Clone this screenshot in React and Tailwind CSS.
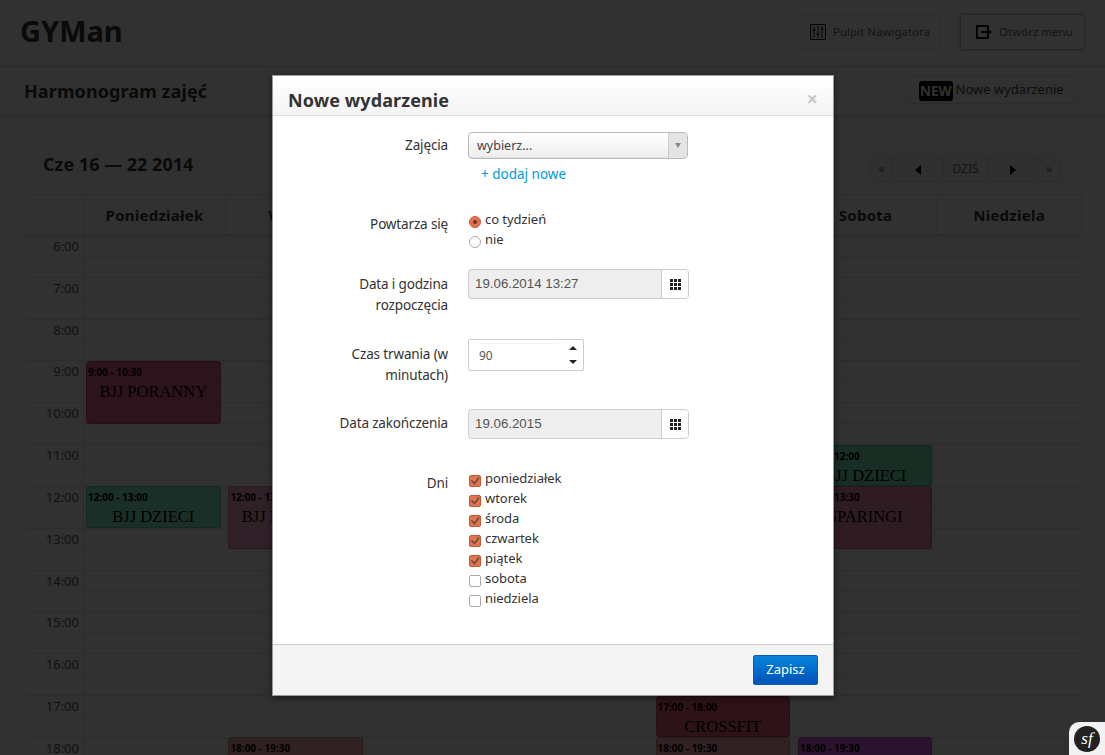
import React from 'react';

const days = ['Poniedziałek', 'Wtorek', 'Środa', 'Czwartek', 'Piątek', 'Sobota', 'Niedziela'];
const hours = ['6:00', '7:00', '8:00', '9:00', '10:00', '11:00', '12:00', '13:00', '14:00', '15:00', '16:00', '17:00', '18:00'];
const ROW = 41.83;

const events = [
  { day: 0, start: 3, len: 1.5, time: '9:00 - 10:30', name: 'BJJ PORANNY', color: 'bg-[#dc5f8c] border-[#c04a78]' },
  { day: 0, start: 6, len: 1, time: '12:00 - 13:00', name: 'BJJ DZIECI', color: 'bg-[#80e8c0] border-[#60c8a0]' },
  { day: 1, start: 6, len: 1.5, time: '12:00 - 13:30', name: 'BJJ PORANNY', color: 'bg-[#f0a0c0] border-[#d080a0]' },
  { day: 1, start: 12, len: 1.5, time: '18:00 - 19:30', name: 'SPARINGI', color: 'bg-[#f0a8a8] border-[#d08888]' },
  { day: 4, start: 11, len: 1, time: '17:00 - 18:00', name: 'CROSSFIT', color: 'bg-[#e05c78] border-[#c04860]' },
  { day: 4, start: 12, len: 1.5, time: '18:00 - 19:30', name: 'SPARINGI', color: 'bg-[#f0a8a8] border-[#d08888]' },
  { day: 5, start: 5, len: 1, time: '11:00 - 12:00', name: 'BJJ DZIECI', color: 'bg-[#78e0b0] border-[#58c090]' },
  { day: 5, start: 6, len: 1.5, time: '12:00 - 13:30', name: 'SPARINGI', color: 'bg-[#e888a8] border-[#c87090]' },
  { day: 5, start: 12, len: 1.5, time: '18:00 - 19:30', name: 'MMA', color: 'bg-[#d860e8] border-[#b848c8]' },
];

const checks = [
  ['poniedziałek', true],
  ['wtorek', true],
  ['środa', true],
  ['czwartek', true],
  ['piątek', true],
  ['sobota', false],
  ['niedziela', false],
];

function GridIcon() {
  return (
    <svg width="11" height="11" viewBox="0 0 11 11" className="fill-[#222]">
      {[0, 4, 8].map(x => [0, 4, 8].map(y => <rect key={`${x}-${y}`} x={x} y={y} width="3" height="3" />))}
    </svg>
  );
}

function DateField({ value }) {
  return (
    <div className="flex w-[221px] h-[30px] rounded-[4px] border border-[#ccc] bg-[#eee] overflow-hidden">
      <div className="flex-1 pl-[6px] leading-[27px] text-[13.3px] text-[#555] font-['Liberation_Sans',sans-serif]">{value}</div>
      <div className="w-[27px] flex items-center justify-center bg-white border-l border-[#ccc]">
        <GridIcon />
      </div>
    </div>
  );
}

function Row({ label, labelClass, className, children }) {
  return (
    <div className={`flex gap-5 ${className}`}>
      <div className={`w-[160px] text-right leading-[21px] text-[13.5px] tracking-[-0.15px] text-[#333] ${labelClass}`}>{label}</div>
      <div>{children}</div>
    </div>
  );
}

function CalendarPage() {
  return (
    <div className="h-[755px] bg-[#f5f5f5] text-[#333]">
      <div className="h-[67px] flex items-center justify-between pl-[20px] pr-[20px] border-b border-[#ccc]">
        <div className="text-[29px] font-bold text-[#333] leading-none mt-[-5px]">GYMan</div>
        <div className="flex gap-5 mt-[-2px]">
          <div className="w-[146px] h-[36px] pl-[15px] flex items-center gap-[7px] border border-[#ddd] rounded-[2px] text-[11.5px] text-[#666]">
            <svg width="16" height="16" viewBox="0 0 16 16" className="fill-none stroke-[#111]">
              <rect x="0.5" y="0.5" width="15" height="15" />
              <path d="M4 2v12M8 2v12M12 2v12M2.5 6h3M6.5 10h3M10.5 5h3" />
            </svg>
            Pulpit Nawigatora
          </div>
          <div className="w-[125px] h-[36px] pl-[15px] flex items-center gap-[7px] border border-[#bbb] rounded-[2px] shadow-[0_0_3px_#8ab] text-[11.5px] text-[#666]">
            <svg width="16" height="16" viewBox="0 0 16 16" className="fill-[#111]">
              <path d="M0 1h13v4h-2V3H2v10h9v-2h2v4H0z" />
              <path d="M5 7h6V4l5 4-5 4V9H5z" />
            </svg>
            Otwórz menu
          </div>
        </div>
      </div>

      <div className="h-[50px] flex items-center justify-between pl-[24px] pr-[27px] border-b border-[#ccc]">
        <div className="text-[18px] tracking-[0.1px] font-bold text-[#333]">Harmonogram zajęć</div>
        <div className="w-[172px] h-[28px] mt-[-4px] pl-[12px] flex items-center gap-[3px] border border-[#ddd] rounded-[3px] text-[13px] text-[#444]">
          <span className="bg-black text-[#f0f0f0] font-bold text-[13.5px] leading-[20px] px-[1px] rounded-[3px] mt-[2px]">NEW</span>
          <span className="mt-[1px]">Nowe wydarzenie</span>
        </div>
      </div>

      <div className="pl-[25px] pr-[23px]">
        <div className="h-[77px] flex justify-between">
          <div className="pl-[18px] pt-[34px] text-[18px] font-bold text-[#333] leading-[26px]">Cze 16 — 22 2014</div>
          <div className="pt-[39px] pr-[21px]">
            <div className="flex h-[26px] border border-[#ddd] rounded-[4px] bg-[#eee] text-[#666] text-[12px] leading-[24px] text-center">
              <div className="w-[22px] border-r border-[#ddd]">«</div>
              <div className="w-[51px] border-r border-[#ddd] flex items-center justify-center">
                <div className="mt-[2px] w-0 h-0 border-y-[5px] border-y-transparent border-r-[6px] border-r-black" />
              </div>
              <div className="w-[43px]">DZIŚ</div>
              <div className="w-[51px] border-x border-[#ddd] flex items-center justify-center">
                <div className="mt-[2px] w-0 h-0 border-y-[5px] border-y-transparent border-l-[6px] border-l-black" />
              </div>
              <div className="w-[22px]">»</div>
            </div>
          </div>
        </div>

        <div className="grid grid-cols-[59px_repeat(6,142.2px)_1fr] h-[42px] border-y border-r border-[#ddd] border-b-[#ccc] text-[15px] tracking-[0.25px] font-bold text-[#333]">
          <div className="border-r border-[#ddd]" />
          {days.map(d => (
            <div key={d} className="border-r border-[#ddd] last:border-r-0 flex items-center justify-center">{d}</div>
          ))}
        </div>

        <div className="relative">
          {hours.map(h => (
            <div key={h} style={{ height: ROW }} className="relative flex border-b border-[#ddd]">
              <div className="w-[59px] shrink-0 border-r border-[#ddd] text-right pr-[4px] text-[13px] leading-[21px] text-[#555]">{h}</div>
              <div className="flex-1 mt-[20px] h-0 border-t border-dotted border-[#ccc]" />
            </div>
          ))}
          <div className="absolute inset-0 left-[59px] grid grid-cols-[repeat(6,142.4px)_1fr]">
            {days.map((d, i) => (
              <div key={d} className="relative">
                {events.filter(e => e.day === i).map(e => (
                  <div
                    key={e.time}
                    style={{ top: e.start * ROW - 0.5, height: e.len * ROW }}
                    className={`absolute left-[2px] w-[134.5px] rounded-[3px] border overflow-hidden ${e.color}`}
                  >
                    <div className="pl-[1px] pt-[1px] text-[10px] font-bold leading-[19px] text-black">{e.time}</div>
                    <div className="mt-[-1px] text-center text-[16.5px] leading-[22px] text-black font-['Liberation_Serif',serif]">{e.name}</div>
                  </div>
                ))}
              </div>
            ))}
          </div>
        </div>
      </div>
    </div>
  );
}

function EventModal() {
  return (
    <div className="w-[562px] h-[621px] bg-white border border-[#999] shadow-[0_2px_6px_rgba(0,0,0,0.5)] flex flex-col">
      <div className="h-[40px] shrink-0 flex items-center justify-between pl-[15px] pr-[15px] bg-gradient-to-b from-white to-[#f4f4f4] border-b border-[#ddd]">
        <div className="text-[18px] tracking-[0.1px] font-bold text-[#333] mt-[9px]">Nowe wydarzenie</div>
        <div className="text-[20px] leading-none font-bold text-[#c8c8c8] mt-[6px]">×</div>
      </div>

      <div className="flex-1 pl-[15px] pt-[16px]">
        <Row label="Zajęcia" labelClass="pt-[3px]" className="h-[52px]">
          <div className="w-[220px] h-[27px] flex rounded-[4px] border border-[#bbb] bg-gradient-to-b from-white to-[#eee] shadow-[inset_0_-1px_1px_#ddd]">
            <div className="flex-1 pl-[8px] text-[12.5px] leading-[25px] text-[#444]">wybierz...</div>
            <div className="w-[19px] flex items-center justify-center border-l border-[#ccc] bg-[#e4e4e4] rounded-r-[4px]">
              <div className="w-0 h-0 border-x-[3.5px] border-x-transparent border-t-[5px] border-t-[#888]" />
            </div>
          </div>
          <div className="pl-[13px] mt-[5px] text-[13.5px] leading-[20px] text-[#0099dd]">+ dodaj nowe</div>
        </Row>

        <Row label="Powtarza się" labelClass="pt-[4px]" className="mt-[26px] h-[40px]">
          <div className="mt-[-1px] text-[13px] tracking-[-0.05px] leading-[20px] text-[#333]">
            <div className="flex items-center gap-[4px] pl-[1px]">
              <span className="w-[12px] h-[12px] mt-[5px] rounded-full bg-[#e2734f] border border-[#c65a38] flex items-center justify-center">
                <span className="w-[4px] h-[4px] rounded-full bg-[#703020]" />
              </span>
              co tydzień
            </div>
            <div className="flex items-center gap-[4px] pl-[1px]">
              <span className="w-[12px] h-[12px] mt-[5px] rounded-full bg-white border border-[#aaa]" />
              nie
            </div>
          </div>
        </Row>

        <Row label={<>Data i godzina<br />rozpoczęcia</>} labelClass="pt-[5px]" className="mt-[19px] h-[70px]">
          <DateField value="19.06.2014 13:27" />
        </Row>

        <Row label={<>Czas trwania (w<br />minutach)</>} labelClass="pt-[5px]" className="h-[70px]">
          <div className="w-[116px] h-[32px] flex border border-[#ccc] rounded-[2px]">
            <div className="flex-1 mt-[3px] ml-[5px] pl-[5px] text-[12px] leading-[24px] text-[#555] border-t border-[#f4f4f4] rounded-t-[6px]">90</div>
            <div className="w-[21px] flex flex-col items-center justify-center gap-[10px]">
              <div className="w-0 h-0 border-x-[4px] border-x-transparent border-b-[4px] border-b-[#222]" />
              <div className="w-0 h-0 border-x-[4px] border-x-transparent border-t-[4px] border-t-[#222]" />
            </div>
          </div>
        </Row>

        <Row label="Data zakończenia" labelClass="pt-[4px]" className="h-[60px]">
          <DateField value="19.06.2015" />
        </Row>

        <Row label="Dni" labelClass="pt-[4px]">
          <div className="mt-[-1px] text-[13px] tracking-[-0.05px] leading-[20px] text-[#333]">
            {checks.map(([name, on]) => (
              <div key={name} className="flex items-center gap-[4px] pl-[1px]">
                <span className={`w-[12px] h-[12px] mt-[6px] rounded-[2px] border flex items-center justify-center ${on ? 'bg-[#e2734f] border-[#c65a38]' : 'bg-white border-[#aaa]'}`}>
                  {on && (
                    <svg width="10" height="10" viewBox="0 0 10 10" className="fill-none stroke-[#6b4a40] stroke-[1.6]">
                      <path d="M1.5 4.5l3 3 4.5-6" />
                    </svg>
                  )}
                </span>
                {name}
              </div>
            ))}
          </div>
        </Row>
      </div>

      <div className="h-[51px] shrink-0 flex items-start justify-end pt-[10px] pr-[15px] bg-[#f4f4f4] border-t border-[#ccc]">
        <div className="w-[65px] h-[30px] flex items-center justify-center rounded-[2px] bg-gradient-to-b from-[#0a84dc] to-[#0052b8] border border-[#0a5cb8] text-[13px] text-white">Zapisz</div>
      </div>
    </div>
  );
}

export default function App() {
  return (
    <div className="relative w-[1105px] h-[755px] overflow-hidden font-['Noto_Sans',sans-serif]">
      <CalendarPage />
      <div className="absolute inset-0 bg-black/80 flex justify-center pt-[75px] pl-[1px]">
        <EventModal />
      </div>
      <div className="absolute right-0 bottom-0 w-[36px] h-[33px] bg-[#f2f2f2] rounded-tl-[10px] flex items-center justify-center">
        <div className="w-[26px] h-[26px] rounded-full bg-[#222] flex items-center justify-center text-[17px] italic text-white font-['Liberation_Serif',serif]">sf</div>
      </div>
    </div>
  );
}
